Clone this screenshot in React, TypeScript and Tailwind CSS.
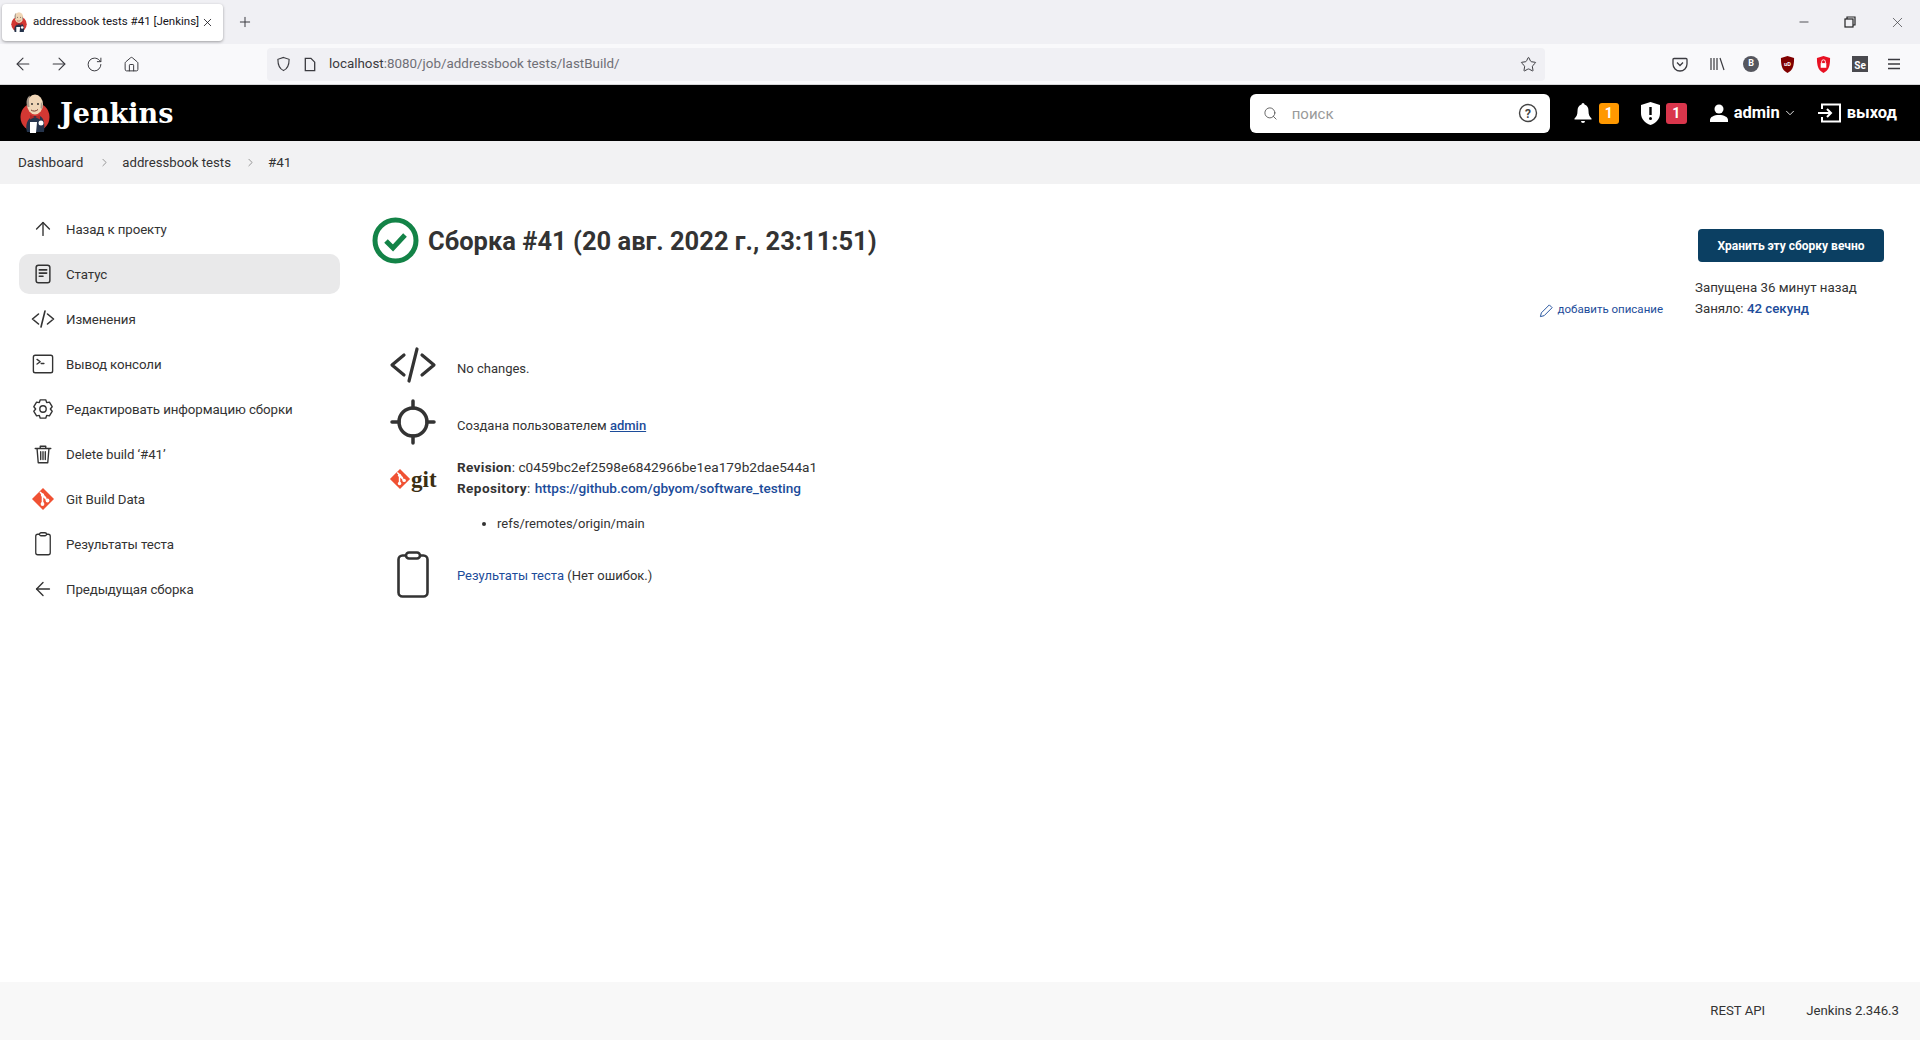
import { ArrowLeft, ArrowRight, ArrowUp, ChevronDown, ChevronRight, Home, Minus, Plus, RotateCw, Search, Star, X } from "lucide-react";
import type { ReactNode } from "react";

const font = "font-['Roboto','Noto_Sans',sans-serif]";

function Mascot({ size }: { size: number }) {
  return (
    <svg width={size} height={size * 1.3} viewBox="0 0 30 39">
      <circle cx="15" cy="23" r="14.500" fill="#d33833" />
      <path d="M7 38c-2-7 0-13 6-16h7c4 2 5 8 4 16z" fill="#25344c" />
      <ellipse cx="15" cy="10.500" rx="8" ry="10" fill="#f0d6b7" />
      <path d="M7.500 13C5.500 8 7 3 10 1.500 8.500 5 9 9 9.500 13zM21 8c2 2 2 5 1 7l-1.500-1z" fill="#a8988a" />
      <circle cx="12" cy="10" r=".9" fill="#222" />
      <circle cx="18" cy="10" r=".9" fill="#222" />
      <path d="M11 16c2 1.500 5 1.500 7-.5" stroke="#7a3b2e" strokeWidth="1" fill="none" />
      <path d="M15 23l-5 2.500v-5zm0 0 5-2.500v5z" fill="#b52a2a" />
      <path d="M10 28h7l-1 11h-6z" fill="#fff" />
      <circle cx="21" cy="29" r="2.500" fill="#fff" />
    </svg>
  );
}

function GitDiamond({ size }: { size: number }) {
  return (
    <svg width={size} height={size} viewBox="0 0 24 24">
      <path d="M1 12 12 1l11 11-11 11z" fill="#f05133" />
      <path d="M9 5l6 6M11.500 8v9M12 9l4.500 4.500" stroke="#fff" strokeWidth="1.600" fill="none" />
      <circle cx="11.500" cy="8" r="1.700" fill="#fff" />
      <circle cx="11.500" cy="17" r="1.900" fill="#fff" />
      <circle cx="16.500" cy="13.500" r="1.900" fill="#fff" />
    </svg>
  );
}

function CodeIcon({ size }: { size: number }) {
  return (
    <svg width={size} height={size} viewBox="0 0 48 48" fill="none" stroke="#333" strokeWidth="3.200" strokeLinecap="round" strokeLinejoin="round">
      <path d="M15 14 3 24l12 10M33 14l12 10-12 10M28 8l-8 32" />
    </svg>
  );
}

function ClipboardIcon({ size }: { size: number }) {
  return (
    <svg width={size} height={size} viewBox="0 0 48 48" fill="none" stroke="#333" strokeWidth="2.600" strokeLinejoin="round">
      <rect x="9.500" y="4.500" width="29" height="41" rx="4" />
      <rect x="17" y="1.500" width="14" height="6" rx="3" fill="#fff" />
    </svg>
  );
}

function StatusIcon() {
  return (
    <svg width="22" height="22" viewBox="0 0 24 24" fill="none" stroke="#333" strokeWidth="1.600" strokeLinecap="round" strokeLinejoin="round">
      <rect x="4.500" y="2.500" width="15" height="19" rx="2.500" />
      <path d="M8 7.500h8M8 11h8M8 14.500h4" strokeWidth="1.800" />
    </svg>
  );
}

function ConsoleIcon() {
  return (
    <svg width="22" height="22" viewBox="0 0 24 24" fill="none" stroke="#333" strokeWidth="1.500" strokeLinecap="round" strokeLinejoin="round">
      <rect x="1.500" y="2.500" width="21" height="19" rx="2" />
      <path d="m5.500 7 3.500 2.500L5.500 12M10 11.500h3" />
    </svg>
  );
}

function GearIcon() {
  return (
    <svg width="22" height="22" viewBox="0 0 24 24" fill="none" stroke="#333" strokeWidth="1.500" strokeLinejoin="round">
      <path d="M9 2h6l1 3 3-.5 3 5-2 2.500 2 2.500-3 5-3-.5-1 3H9l-1-3-3 .5-3-5 2-2.500-2-2.500 3-5 3 .5z" />
      <circle cx="12" cy="12" r="3.500" />
    </svg>
  );
}

function TrashIcon() {
  return (
    <svg width="22" height="22" viewBox="0 0 24 24" fill="none" stroke="#333" strokeWidth="1.500" strokeLinecap="round" strokeLinejoin="round">
      <path d="M3.500 6h17M9 6V3.500h6V6M5.500 6l1.300 15.500h10.400L18.500 6M9.500 9.500v8.500M12 9.500v8.500M14.500 9.500v8.500" />
    </svg>
  );
}

function SidebarItem({ icon, label, active }: { icon: ReactNode; label: string; active?: boolean }) {
  return (
    <div className={`flex h-10 items-center gap-[11px] rounded-[10px] pl-[12px] text-[13.3px] tracking-[-0.1px] ${active ? "bg-[#e9e9ea]" : ""}`}>
      <span className="flex w-6 justify-center">{icon}</span>
      <span className="pt-px">{label}</span>
    </div>
  );
}

const sidebar: { icon: ReactNode; label: string; active?: boolean }[] = [
  { icon: <ArrowUp size={22} strokeWidth={1.5} />, label: "Назад к проекту" },
  { icon: <StatusIcon />, label: "Статус", active: true },
  { icon: <CodeIcon size={24} />, label: "Изменения" },
  { icon: <ConsoleIcon />, label: "Вывод консоли" },
  { icon: <GearIcon />, label: "Редактировать информацию сборки" },
  { icon: <TrashIcon />, label: "Delete build ‘#41’" },
  { icon: <GitDiamond size={24} />, label: "Git Build Data" },
  { icon: <ClipboardIcon size={24} />, label: "Результаты теста" },
  { icon: <ArrowLeft size={22} strokeWidth={1.5} />, label: "Предыдущая сборка" },
];

function BrowserChrome() {
  return (
    <div className="text-[#3b3b40]">
      <div className="flex h-[44px] items-center bg-[#f0f0f4] pr-[14px]">
        <div className="ml-[2px] flex h-[37px] w-[221px] items-center rounded-[4px] bg-white pl-[9px] text-[11.500px] text-[#15141a] shadow-[0_1px_3px_rgba(0,0,0,0.35)]">
          <Mascot size={16} />
          <span className="ml-[6px] whitespace-nowrap">addressbook tests #41 [Jenkins]</span>
          <X size={13} strokeWidth={1.5} className="ml-auto mr-[9px]" />
        </div>
        <Plus size={16} strokeWidth={1.5} className="ml-[14px]" />
        <div className="ml-auto flex items-center gap-[33px]">
          <Minus size={14} strokeWidth={1.5} />
          <svg width="12" height="12" viewBox="0 0 12 12" fill="none" stroke="#222" strokeWidth="1.200"><rect x="1" y="3" width="8" height="8" /><path d="M3 3V1h8v8H9" /></svg>
          <X size={17} strokeWidth={1} />
        </div>
      </div>
      <div className="flex h-[41px] items-center border-b border-[#d6d6d8] bg-[#f9f9fb] pl-[13px] pr-[16px]">
        <ArrowLeft size={20} strokeWidth={1.3} />
        <ArrowRight size={20} strokeWidth={1.3} className="ml-[16px]" />
        <RotateCw size={17} strokeWidth={1.4} className="ml-[17px]" />
        <Home size={17} strokeWidth={1.4} className="ml-[20px]" />
        <div className="ml-[127px] flex h-[33px] w-[1278px] items-center rounded-[4px] bg-[#f0f0f4] pl-[9px] text-[13.400px]">
          <svg width="15" height="16" viewBox="0 0 16 16" fill="none" stroke="#3b3b40" strokeWidth="1.200"><path d="M8 1l6 2c0 6-1 10-6 12C3 13 2 9 2 3z" /></svg>
          <svg className="ml-[12px]" width="14" height="15" viewBox="0 0 14 16" fill="none" stroke="#3b3b40" strokeWidth="1.400"><path d="M2 1.500h6l4 4v9H2z" /></svg>
          <span className="ml-[12px]">localhost<span className="text-[#6f6f76]">:8080/job/addressbook tests/lastBuild/</span></span>
          <Star size={17} strokeWidth={1.4} className="ml-auto mr-[8px]" />
        </div>
        <svg className="ml-[127px]" width="16" height="16" viewBox="0 0 16 16" fill="none" stroke="#3b3b40" strokeWidth="1.300"><path d="M2 2.500h12a1 1 0 0 1 1 1V8a7 7 0 0 1-14 0V3.500a1 1 0 0 1 1-1z" /><path d="m5 6.500 3 3 3-3" /></svg>
        <svg className="ml-[21px]" width="16" height="16" viewBox="0 0 16 16" fill="none" stroke="#3b3b40" strokeWidth="1.200"><path d="M2 2v12M5 2v12M8 2v12M11 2l4 12" /></svg>
        <span className="ml-[18px] flex h-[16px] w-[16px] items-center justify-center rounded-full bg-[#55565e] text-[9px] font-bold text-white">B</span>
        <svg className="ml-[21px]" width="15" height="17" viewBox="0 0 16 18"><path d="M8 0l7 2c0 8-1 13-7 16C2 15 1 10 1 2z" fill="#800000" /><text x="8" y="11" fontSize="6" fontWeight="700" fill="#fff" textAnchor="middle">uD</text></svg>
        <svg className="ml-[21px]" width="15" height="17" viewBox="0 0 16 18"><path d="M8 0l7 2c0 8-1 13-7 16C2 15 1 10 1 2z" fill="#e81123" /><rect x="5" y="7.500" width="6" height="5" fill="#fff" /><path d="M6 7.500V6a2 2 0 0 1 4 0v1.500" stroke="#fff" fill="none" /></svg>
        <span className="ml-[21px] flex h-[16px] w-[16px] items-end justify-center bg-[#4a4a4f] text-[10px] font-bold leading-[12px] text-white">Se</span>
        <svg className="ml-[19px]" width="14" height="14" viewBox="0 0 14 14" stroke="#3b3b40" strokeWidth="1.300"><path d="M1 2.500h12M1 7h12M1 11.500h12" /></svg>
      </div>
    </div>
  );
}

function JenkinsHeader() {
  return (
    <div className="flex h-[56px] items-center bg-black text-white">
      <div className="ml-[20px]"><Mascot size={30} /></div>
      <span className="ml-[10px] font-['DejaVu_Serif',serif] text-[27px] font-bold leading-none">Jenkins</span>
      <div className="ml-auto flex h-[39px] w-[300px] items-center rounded-[6px] bg-white pl-[13px] pr-[12px] text-[#9a9a9a]">
        <Search size={15} strokeWidth={1.4} className="text-[#555]" />
        <span className="ml-[14px] pt-[2px] text-[15px]">поиск</span>
        <svg className="ml-auto" width="20" height="20" viewBox="0 0 20 20" fill="none" stroke="#444" strokeWidth="1.400"><circle cx="10" cy="10" r="8.500" /><text x="10" y="14.500" fontSize="12" fontWeight="700" fill="#444" stroke="none" textAnchor="middle">?</text></svg>
      </div>
      <svg className="ml-[23px]" width="20" height="22" viewBox="0 0 20 22" fill="#fff"><path d="M10 1a1.500 1.500 0 0 1 1.500 1.500C14.500 3.500 15.500 6 15.500 9c0 4 1 5.500 3 7.500v1h-17v-1c2-2 3-3.500 3-7.500 0-3 1-5.500 4-6.500A1.500 1.500 0 0 1 10 1zM8 19h4a2 2 0 0 1-4 0z" /></svg>
      <span className="ml-[6px] flex h-[21px] w-[20px] items-center justify-center rounded-[3px] bg-[#ff9800] text-[14px] font-bold">1</span>
      <svg className="ml-[22px]" width="19" height="23" viewBox="0 0 19 23"><path d="M9.500 0 19 3v8c0 6-4 10-9.500 12C4 21 0 17 0 11V3z" fill="#fff" /><path d="M9.500 5v8" stroke="#000" strokeWidth="2.400" /><circle cx="9.500" cy="16.500" r="1.500" fill="#000" /></svg>
      <span className="ml-[6px] flex h-[21px] w-[21px] items-center justify-center rounded-[3px] bg-[#d9364c] text-[14px] font-bold">1</span>
      <svg className="ml-[23px]" width="18" height="18" viewBox="0 0 18 18" fill="#fff"><circle cx="9" cy="5" r="4.500" /><path d="M0 18v-2c0-3 4-5 9-5s9 2 9 5v2z" /></svg>
      <span className="ml-[6px] text-[16.500px] font-bold">admin</span>
      <ChevronDown size={14} strokeWidth={1.5} className="ml-[3px]" />
      <svg className="ml-[20px]" width="24" height="20" viewBox="0 0 24 20" fill="none" stroke="#fff" strokeWidth="2"><path d="M5 6V1.500h18v17H5V14M1 10h13M10 6l4 4-4 4" /></svg>
      <span className="ml-[6px] mr-[23px] text-[16.500px] font-bold">выход</span>
    </div>
  );
}

function Breadcrumb() {
  return (
    <div className="flex h-[43px] items-center bg-[#f2f2f3] pl-[18px] text-[13.500px] text-[#333]">
      <span>Dashboard</span>
      <ChevronRight size={13} strokeWidth={1.2} className="ml-[15px] text-[#666]" />
      <span className="ml-[11px] text-[13.200px]">addressbook tests</span>
      <ChevronRight size={13} strokeWidth={1.2} className="ml-[13px] text-[#666]" />
      <span className="ml-[11px]">#41</span>
    </div>
  );
}

function BuildInfo() {
  return (
    <div className="min-w-0 flex-1 pt-[33px]">
      <div className="flex items-center gap-[9px]">
        <svg width="47" height="47" viewBox="0 0 47 47">
          <circle cx="23.500" cy="23.500" r="20.500" fill="none" stroke="#138347" strokeWidth="5" />
          <path d="m14 24 7 7 12-13" fill="none" stroke="#138347" strokeWidth="5" />
        </svg>
        <h1 className="pt-[2px] text-[25.500px] font-bold text-[#333]">Сборка #41 (20 авг. 2022 г., 23:11:51)</h1>
      </div>
      <div className="mt-[36px] flex h-5 items-center justify-end gap-[4px] pr-[32px] text-[11.500px] text-[#1c4c9a]">
        <svg width="15" height="15" viewBox="0 0 16 16" fill="none" stroke="#1c4c9a" strokeWidth="1"><path d="m1.500 14.500 1-4L11 2l3 3-8.500 8.500z" /></svg>
        <span>добавить описание</span>
      </div>
      <div className="mt-[21px] flex h-12 items-center">
        <div className="w-[85px] pl-[17px]"><CodeIcon size={48} /></div>
        <span className="pt-[7px] text-[13px]">No changes.</span>
      </div>
      <div className="mt-[9px] flex h-12 items-center">
        <div className="w-[85px] pl-[17px]">
          <svg width="48" height="48" viewBox="0 0 48 48" fill="none" stroke="#333" strokeWidth="3.500" strokeLinecap="round">
            <circle cx="24" cy="24" r="14" />
            <path d="M24 3v7M24 38v7M3 24h7M38 24h7" />
          </svg>
        </div>
        <span className="pt-[8px] text-[13px]">
          Создана пользователем <span className="font-medium text-[#1c4c9a] underline">admin</span>
        </span>
      </div>
      <div className="mt-[11px] flex">
        <div className="flex h-[44px] w-[85px] items-center pl-[17px]">
          <GitDiamond size={22} />
          <span className="font-['Liberation_Serif',serif] text-[23px] font-bold leading-none text-[#3a2e12]">git</span>
        </div>
        <div className="leading-[21px]">
          <div className="text-[13.600px]"><b className="tracking-[0.3px]">Revision</b>: c0459bc2ef2598e6842966be1ea179b2dae544a1</div>
          <div className="text-[13.600px]"><b className="tracking-[0.4px]">Repository</b>: <span className="ml-[1px] font-medium text-[#1c4c9a]">https://github.com/gbyom/software_testing</span></div>
          <ul className="mt-[14px] list-disc pl-10 text-[13px]">
            <li>refs/remotes/origin/main</li>
          </ul>
        </div>
      </div>
      <div className="mt-[17px] flex h-12 items-center">
        <div className="w-[85px] pl-[17px]"><ClipboardIcon size={48} /></div>
        <span className="pt-[2px] text-[13px]"><span className="text-[#1c4c9a]">Результаты теста</span> (Нет ошибок.)</span>
      </div>
    </div>
  );
}

export default function App() {
  return (
    <div className={`flex h-[1040px] w-[1920px] flex-col overflow-hidden bg-white text-[14px] text-[#333] ${font}`}>
      <BrowserChrome />
      <JenkinsHeader />
      <Breadcrumb />
      <div className="flex flex-1">
        <div className="ml-[19px] flex w-[321px] flex-col gap-[5px] pt-[25px]">
          {sidebar.map((item) => (
            <SidebarItem key={item.label} {...item} />
          ))}
        </div>
        <div className="ml-[32px] flex flex-1">
          <BuildInfo />
          <div className="w-[225px] pt-[45px]">
            <div className="ml-[3px] flex h-[33px] w-[186px] items-center justify-center rounded-[4px] bg-[#0b3f62] text-[12px] font-bold text-white">
              Хранить эту сборку вечно
            </div>
            <div className="mt-[15px] text-[13.300px] leading-[21px]">Запущена 36 минут назад</div>
            <div className="text-[13.300px] leading-[21px]">Заняло: <span className="font-medium text-[#1c4c9a]">42 секунд</span></div>
          </div>
        </div>
      </div>
      <div className="flex h-[58px] items-center justify-end gap-[41px] bg-[#f8f8f8] pr-[21px] text-[13.200px]">
        <span>REST API</span>
        <span>Jenkins 2.346.3</span>
      </div>
    </div>
  );
}
